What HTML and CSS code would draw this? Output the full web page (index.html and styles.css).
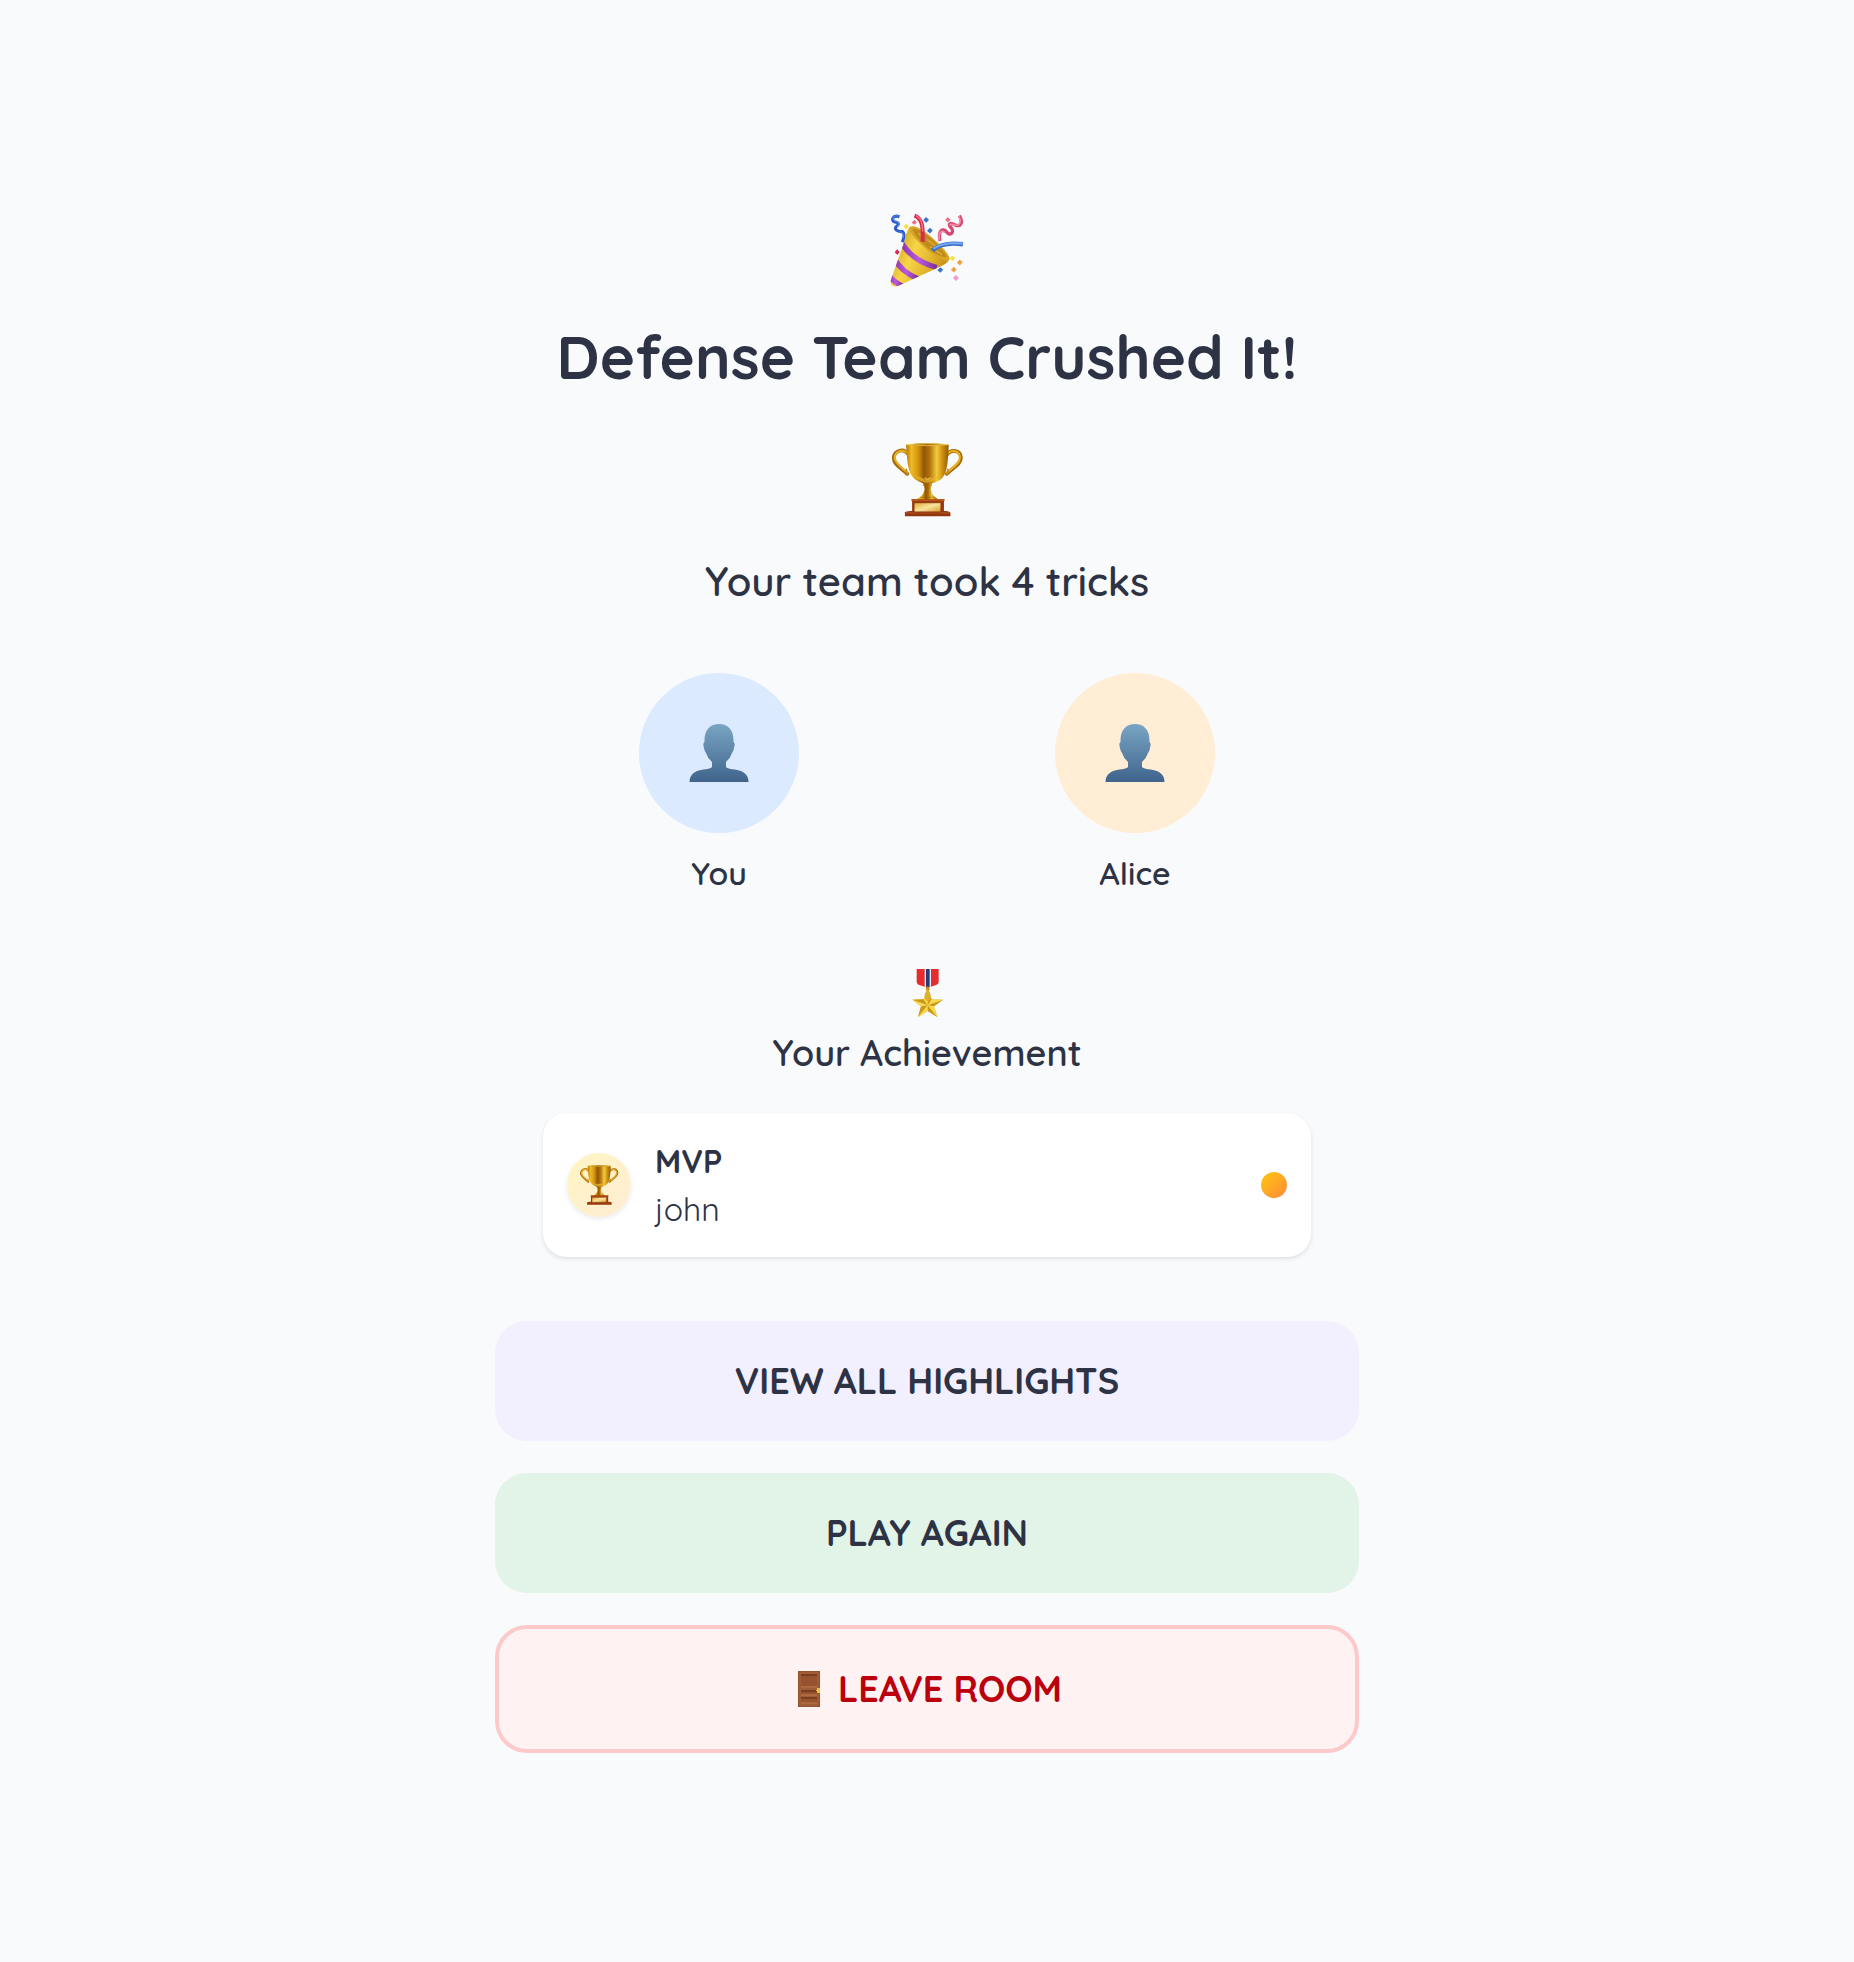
FILE: index.html
```html
<!DOCTYPE html>
<html lang="en">
<head>
<meta charset="utf-8">
<meta name="viewport" content="width=device-width, initial-scale=1">
<title>Game Results</title>
<link rel="stylesheet" href="styles.css">
</head>
<body>
<svg class="defs" width="0" height="0" aria-hidden="true">
  <defs>
    <linearGradient id="gold" x1="0" x2="1" y1="0" y2="0">
      <stop offset="0" stop-color="#b87606"/><stop offset=".13" stop-color="#eebb24"/><stop offset=".3" stop-color="#cf900d"/><stop offset=".42" stop-color="#925607"/><stop offset=".55" stop-color="#b0710a"/><stop offset=".72" stop-color="#f3cb3e"/><stop offset=".86" stop-color="#cb8c0e"/><stop offset="1" stop-color="#8f5a05"/>
    </linearGradient>
    <linearGradient id="plate" x1="0" x2="1" y1="0" y2="1">
      <stop offset="0" stop-color="#e0a63a"/><stop offset=".5" stop-color="#fbe49a"/><stop offset="1" stop-color="#d99a30"/>
    </linearGradient>
    <linearGradient id="cone" x1="0" x2="1" y1=".3" y2=".8">
      <stop offset="0" stop-color="#c99b1c"/><stop offset=".35" stop-color="#f8d548"/><stop offset=".65" stop-color="#e2b42c"/><stop offset="1" stop-color="#b57f12"/>
    </linearGradient>
    <linearGradient id="stripe" x1="0" x2="1" y1="0" y2="0">
      <stop offset="0" stop-color="#8d35b4"/><stop offset=".5" stop-color="#b95bdc"/><stop offset="1" stop-color="#7a2d9c"/>
    </linearGradient>
    <linearGradient id="bust" x1="0" x2="0" y1="0" y2="1">
      <stop offset="0" stop-color="#79a5c4"/><stop offset="1" stop-color="#40648c"/>
    </linearGradient>
    <clipPath id="cone-clip"><path d="M119 92Q109 106 103 137L63 251Q61 270 83 268L216 207Q236 198 238 184Z"/></clipPath>
    <symbol id="trophy" viewBox="61 44 218 218">
      <g fill="none" stroke-linecap="round">
        <path d="M115 77C101 58 74 65 72 88C71 108 97 119 112 135M230 77C242 61 269 65 270 87C271 107 243 119 228 135" stroke="#a86b08" stroke-width="11"/>
        <path d="M114 75C100 60 76 67 75 87C75 105 98 117 112 132M231 75C243 62 266 67 267 86C267 105 244 117 228 132" stroke="#e6b326" stroke-width="6"/>
        <path d="M112 77Q119 83 119 92M232 77Q224 83 224 92M110 122Q107 128 112 135M231 122Q235 130 228 136" stroke="#c98d16" stroke-width="5"/>
      </g>
      <path d="M157 160H186Q185 170 181 176Q181 193 193 203Q205 209 200 216H142Q137 209 150 203Q163 193 163 176Q159 170 157 160Z" fill="url(#gold)"/>
      <path d="M158 168H185M161 176H182M149 204H195M142 213H202" stroke="#935c06" stroke-width="2" opacity=".65"/>
      <path d="M108 49Q170 41 234 49C232 95 231 139 208 153Q188 165 172 165Q156 165 138 153C112 137 112 94 108 49Z" fill="url(#gold)"/>
      <path d="M109 49Q170 42 233 49Q171 55 109 49Z" fill="#a36a0b" stroke="#f7d75c" stroke-width="2"/>
      <path d="M132 135Q170 162 208 137Q194 160 171 161Q148 160 132 135Z" fill="#e6b52e" opacity=".7"/>
      <path d="M163 145L172 151L181 145" fill="none" stroke="#ffe16c" stroke-width="2"/>
      <path d="M126 210H220V248H126Z" fill="#9d3c10"/>
      <path d="M124 210H222V215H124Z" fill="#b95316"/>
      <path d="M105 249Q106 245 122 244H224Q239 245 239 250V260H105Z" fill="#93360d"/>
      <path d="M107 250H237" stroke="#c4682a" stroke-width="2"/>
      <path d="M132 220H211V247H132Z" fill="url(#plate)" stroke="#7b2b08" stroke-width="2"/>
    </symbol>
    <symbol id="person" viewBox="0 0 60 58">
      <path d="M30 0C39 0 45 6 44.500 18Q46.500 19 45 24Q44.500 27 43.500 28Q41.500 34 37 38V43Q37.500 44 41.500 45Q59.500 46 59.500 58H.5Q.5 46 18.500 45Q22.500 44 23 43V38Q18.500 34 16.500 28Q15.500 27 15 24Q13.500 19 15.500 18C15 6 21 0 30 0Z" fill="url(#bust)"/>
    </symbol>
  </defs>
</svg>

<main class="results">
  <svg class="emoji" viewBox="61 50 220 220" role="img" aria-label="Party popper">
    <path d="M119 92Q109 106 103 137L63 251Q61 270 83 268L216 207Q236 198 238 184Z" fill="url(#cone)"/>
    <g clip-path="url(#cone-clip)" fill="none" stroke="url(#stripe)" stroke-width="16">
      <path d="M96 140Q130 194 200 212"/>
      <path d="M74 186Q96 226 145 246"/>
      <path d="M57 233Q69 254 99 268"/>
    </g>
    <path d="M119 92C133 80 171 107 199 135C225 160 243 181 236 190C222 199 181 171 151 141C128 119 113 99 119 92Z" fill="#d8a525"/>
    <path d="M128 97C147 95 178 118 198 140Q225 168 229 181C208 183 175 158 153 135Q131 113 128 97Z" fill="#c08a1c"/>
    <path d="M145 110L164 126M171 128L202 153M180 151L216 174" stroke="#e6b735" stroke-width="6" opacity=".65"/>
    <g fill="none" stroke-linecap="butt">
      <path d="M134 58C157 67 160 89 158 136" stroke="#d72b50" stroke-width="12"/>
      <path d="M139 58C158 69 159 88 158 105" stroke="#f1768c" stroke-width="4"/>
      <path d="M187 162Q215 135 278 143" stroke="#3d70c8" stroke-width="13"/>
      <path d="M190 156Q219 135 277 141" stroke="#78aaf0" stroke-width="6"/>
      <path d="M89 61C68 54 63 74 75 77C87 78 89 83 81 89C70 98 84 107 98 105Q107 110 98 137" stroke="#2a5bcb" stroke-width="9"/>
      <path d="M87 59C69 55 67 70 77 74C91 77 90 87 82 91M88 106Q103 105 101 125" stroke="#5685e6" stroke-width="3"/>
      <path d="M210 133C202 101 220 94 228 105C242 124 255 102 240 91C232 78 244 80 255 86C271 92 280 78 267 58" stroke="#d6486f" stroke-width="10"/>
      <path d="M208 130C203 107 216 99 224 109M240 87C236 78 252 89 263 86Q275 80 266 60" stroke="#f38ca5" stroke-width="5"/>
    </g>
    <g fill="#ef6f87"><path d="m134 70 7 8-8 7-8-7ZM233 62l8 8-8 8-8-8Z"/><path d="m82 158 8 8-7 9-8-8Z" fill="#d92854"/></g>
    <g fill="#3774c9"><path d="m168 62 9 8-8 9-9-8ZM180 94l8 8-8 9-9-8ZM210 211l9 8-8 9-9-8Z"/></g>
    <path d="m109 82 8 7-7 9-9-7ZM246 177l9 7-8 9-9-8Z" fill="#f7e03f"/>
    <path d="m268 188 9 8-8 10-9-8ZM251 210l8 8-8 9-9-8Z" fill="#f3a03e"/>
    <path d="m257 234 9 9-9 9-9-9Z" fill="#f19bc6"/>
  </svg>

  <h1 class="title">Defense Team Crushed It!</h1>
  <svg class="emoji emoji-trophy" role="img" aria-label="Trophy"><use href="#trophy"/></svg>
  <p class="summary">Your team took 4 tricks</p>

  <ul class="players">
    <li class="player">
      <span class="avatar avatar-you"><svg class="bust" aria-hidden="true"><use href="#person"/></svg></span>
      <span class="name">You</span>
    </li>
    <li class="player">
      <span class="avatar avatar-mate"><svg class="bust" aria-hidden="true"><use href="#person"/></svg></span>
      <span class="name">Alice</span>
    </li>
  </ul>

  <section class="achievement">
    <svg class="medal" viewBox="40 42 144 144" aria-hidden="true">
      <path d="M81 42H147V82Q146 89 137 91L114 98L91 91Q82 89 81 82Z" fill="#e52d2e"/>
      <path d="M105 42H124V95L114 98L105 95Z" fill="#e8edf5"/>
      <path d="M109 42H120V96L114 98L109 96Z" fill="#243c7c"/>
      <path d="M109 95H119V107H109Z" fill="#bd8b1d"/>
      <path d="m114 101 12 32 34 1-27 20 10 32-29-18-29 18 9-32-26-20 34-1Z" fill="#e4b92e"/>
      <path d="m114 101 12 32-12 18ZM160 134l-46 17 19 3ZM143 186l-29-35v17ZM85 186l29-35-20 3ZM68 134l46 17-12-18Z" fill="#c99a1e"/>
      <path d="m114 101-12 32 12 18ZM126 133l34 1-46 17ZM133 154l10 32-29-35ZM114 168l-29 18 29-35ZM94 154l-26-20 46 17Z" fill="#f6d94f"/>
      <path d="M114 104Q101 116 106 133L114 139L122 133Q126 116 114 104Z" fill="#e0b02b"/>
    </svg>
    <h2 class="subtitle">Your Achievement</h2>
    <article class="card">
      <span class="badge"><svg class="badge-icon" aria-hidden="true"><use href="#trophy"/></svg></span>
      <div class="award">
        <h3 class="award-name">MVP</h3>
        <p class="award-player">john</p>
      </div>
      <span class="dot"></span>
    </article>
  </section>

  <div class="actions">
    <button type="button" class="btn btn-highlights">VIEW ALL HIGHLIGHTS</button>
    <button type="button" class="btn btn-play">PLAY AGAIN</button>
    <button type="button" class="btn btn-leave">
      <svg class="door" viewBox="-6 0 28 36" aria-hidden="true">
        <path d="M0 0H22V36H0Z" fill="#91522f"/>
        <path d="M1 1H21V35H1Z" fill="#a05c37"/>
        <path d="M3 4H19V15H3ZM3 20H19V23H3ZM3 28H19V32H3Z" fill="#96532f"/>
        <path d="M3 4H19M3 20H19M3 27H19" stroke="#6f3517" stroke-width="1.500"/>
        <path d="M3 16H19M3 24H19M3 32H19" stroke="#bd764a" stroke-width="1"/>
        <path d="M18 19H19V17H22V22H19V20H18Z" fill="#edc23a"/>
      </svg>
      <span>LEAVE ROOM</span>
    </button>
  </div>
</main>
</body>
</html>
```
FILE: styles.css
```css
*,
*::before,
*::after {
  box-sizing: border-box;
}

body {
  margin: 0;
  background: #f8fafc;
  color: #2d3344;
  font-family: Quicksand, Lato, "Open Sans", sans-serif;
}

h1,
h2,
h3,
p,
ul {
  margin: 0;
  padding: 0;
}

svg {
  display: block;
  flex: none;
}

.defs {
  position: absolute;
}

.results {
  display: flex;
  flex-direction: column;
  align-items: center;
  justify-content: center;
  width: 100%;
  max-width: 864px;
  min-height: 100vh;
  margin: 0 auto;
  padding-top: 4px;
  text-align: center;
}

.emoji {
  width: 74px;
  height: 74px;
}

.title {
  margin-top: 34px;
  font-size: 60px;
  line-height: 72px;
  font-weight: 700;
}

.emoji-trophy {
  margin-top: 50px;
}

.summary {
  margin-top: 40px;
  font-size: 40px;
  line-height: 48px;
  font-weight: 600;
}

.players {
  display: grid;
  grid-template-columns: 1fr 1fr;
  gap: 64px;
  width: 100%;
  margin-top: 68px;
  padding: 0 48px;
  list-style: none;
}

.player {
  display: flex;
  flex-direction: column;
  align-items: center;
  gap: 16px;
}

.avatar {
  display: flex;
  align-items: center;
  justify-content: center;
  width: 160px;
  height: 160px;
  border-radius: 50%;
}

.avatar-you {
  background: #dbeafe;
}

.avatar-mate {
  background: #ffedd5;
}

.bust {
  width: 60px;
  height: 58px;
}

.name {
  font-size: 32px;
  line-height: 48px;
  font-weight: 600;
}

.achievement {
  display: flex;
  flex-direction: column;
  align-items: center;
  width: 100%;
  margin-top: 72px;
  padding: 0 48px;
}

.medal {
  width: 48px;
  height: 48px;
}

.subtitle {
  margin-top: 12px;
  font-size: 36px;
  line-height: 48px;
  font-weight: 600;
}

.card {
  display: flex;
  align-items: center;
  gap: 24px;
  width: 100%;
  margin-top: 36px;
  padding: 24px;
  border-radius: 24px;
  background: #fff;
  box-shadow: 0 2px 4px rgba(45, 49, 66, 0.12);
  text-align: left;
}

.badge {
  display: flex;
  flex: none;
  align-items: center;
  justify-content: center;
  width: 64px;
  height: 64px;
  border-radius: 50%;
  background: linear-gradient(135deg, #fff5c2, #ffedd5);
  box-shadow: 0 2px 4px rgba(45, 49, 66, 0.1);
}

.badge-icon {
  width: 40px;
  height: 40px;
}

.award {
  flex: 1;
}

.award-name,
.award-player {
  font-size: 32px;
  line-height: 48px;
}

.award-name {
  font-weight: 700;
}

.award-player {
  font-weight: 400;
}

.dot {
  flex: none;
  width: 26px;
  height: 26px;
  border-radius: 50%;
  background: linear-gradient(135deg, #fdc70a, #ff8a3d);
}

.actions {
  display: flex;
  flex-direction: column;
  gap: 32px;
  width: 100%;
  margin-top: 64px;
}

.btn {
  display: flex;
  align-items: center;
  justify-content: center;
  gap: 18px;
  padding: 36px;
  border: 0;
  border-radius: 32px;
  color: inherit;
  font: inherit;
  font-size: 36px;
  line-height: 48px;
  font-weight: 700;
  cursor: pointer;
}

.btn-highlights {
  background: #f2effe;
}

.btn-play {
  background: #e2f3e8;
}

.btn-leave {
  border: 4px solid #fccaca;
  background: #fef2f2;
  color: #bb000e;
}

.door {
  width: 28px;
  height: 36px;
}
```
